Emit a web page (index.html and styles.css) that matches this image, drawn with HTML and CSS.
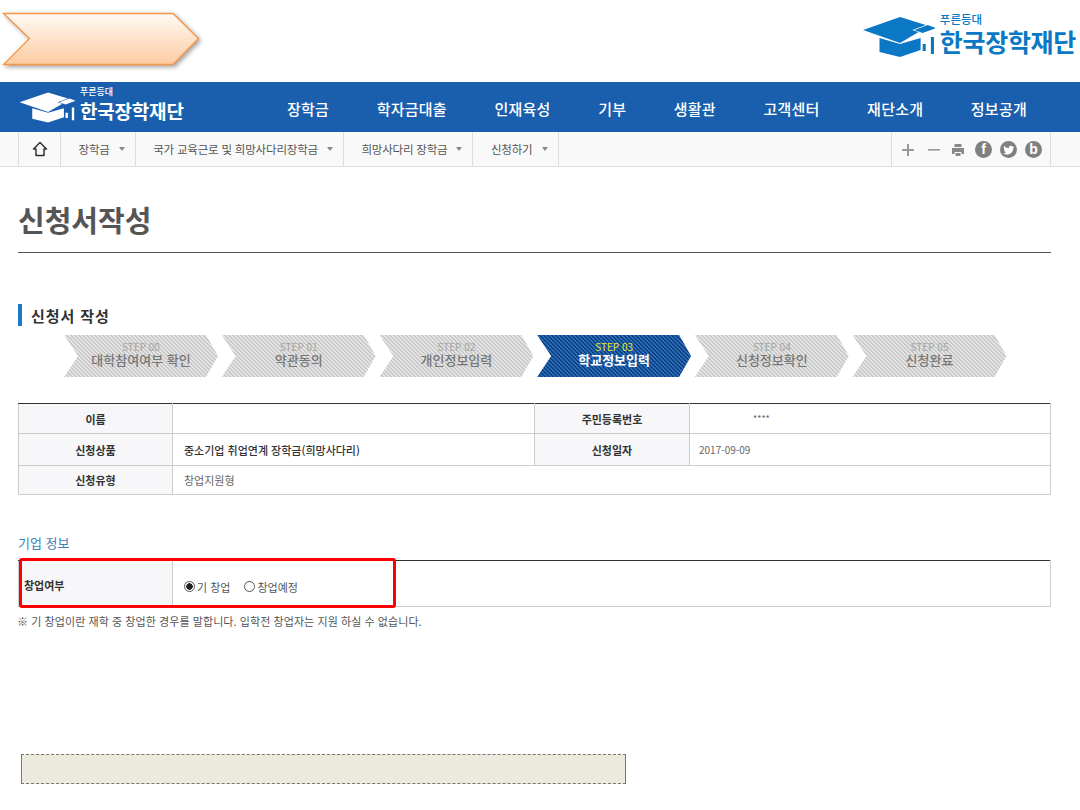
FILE: index.html
```html
<!DOCTYPE html>
<html lang="ko">
<head>
<meta charset="utf-8">
<title>신청서작성</title>
<link rel="stylesheet" href="styles.css">
</head>
<body>
<svg class="defs" width="0" height="0" aria-hidden="true">
  <symbol id="cap" viewBox="20 15 72 44" preserveAspectRatio="none">
    <path d="M22 30 58 17 83 25 70 30 76 32 58 43Z"/>
    <path d="M72 30 85 25 93 28 80 33Z"/>
    <path d="M38 38 58 44 78 38V50L58 57 38 52Z"/>
    <path d="M88 37h3v17h-3zM80 44h3v7h-3z"/>
  </symbol>
</svg>
<header class="top">
  <svg class="callout" width="204" height="60" viewBox="0 0 204 60">
    <defs><linearGradient id="peach" x1="0" y1="0" x2="0" y2="1"><stop offset="0" stop-color="#fffaf5"/><stop offset="1" stop-color="#fccba0"/></linearGradient></defs>
    <path d="M3.500 1.500H173L198.500 26.500 173 52.500H3.500L29.500 26.500Z" fill="url(#peach)" stroke="#f79646" stroke-width="1.300"/>
  </svg>
  <div class="logo logo-top">
    <svg class="logo-cap" width="72" height="44"><use href="#cap"/></svg>
    <div class="logo-text"><span class="logo-small">푸른등대</span><strong class="logo-name">한국장학재단</strong></div>
  </div>
</header>
<nav class="mainnav">
  <div class="logo logo-nav">
    <svg class="logo-cap" width="56" height="33"><use href="#cap"/></svg>
    <div class="logo-text"><span class="logo-small">푸른등대</span><strong class="logo-name">한국장학재단</strong></div>
  </div>
  <ul class="menu">
    <li>장학금</li><li>학자금대출</li><li>인재육성</li><li>기부</li><li>생활관</li><li>고객센터</li><li>재단소개</li><li>정보공개</li>
  </ul>
</nav>
<div class="crumbs">
  <div class="crumb-home">
    <svg width="16" height="16" viewBox="0 0 16 16"><path d="M8 1.500 1.500 8H4V14.500H12V8H14.500Z" fill="none" stroke="#333" stroke-width="1.500" stroke-linejoin="round"/></svg>
  </div>
  <div class="crumb">장학금<i class="caret"></i></div>
  <div class="crumb">국가 교육근로 및 희망사다리장학금<i class="caret"></i></div>
  <div class="crumb">희망사다리 장학금<i class="caret"></i></div>
  <div class="crumb">신청하기<i class="caret"></i></div>
  <div class="tools">
    <svg width="12" height="12" viewBox="0 0 12 12"><path d="M5 0h2v5h5v2H7v5H5V7H0V5h5z" fill="#999"/></svg>
    <svg width="12" height="12" viewBox="0 0 12 12"><path d="M0 5h12v1.600H0z" fill="#999"/></svg>
    <svg width="14" height="14" viewBox="0 0 14 14"><path d="M3.500 1h7v3h-7zM1 5h12v6h-2.500V9h-7v2H1zM4.500 10h5v3h-5z" fill="#888"/></svg>
    <span class="sns">f</span>
    <span class="sns"><svg width="12" height="10" viewBox="0 0 12 10"><path d="M0 8.500C3 10.500 10 10 10.300 3L11.800 1.500 10 2C9 .2 6 .2 5.700 3.200 4 3.200 2 2 1 .8.300 2.500 1 4 2 4.800L.8 4.500C1 6 2 6.800 3 7 2.500 8 1.500 8.500 0 8.500Z" fill="#fff"/></svg></span>
    <span class="sns">b</span>
  </div>
</div>
<main class="content">
  <h1 class="page-title">신청서작성</h1>
  <h2 class="section-title">신청서 작성</h2>
  <ol class="steps">
    <li class="step"><span class="step-no">STEP 00</span><span class="step-name">대학참여여부 확인</span></li>
    <li class="step"><span class="step-no">STEP 01</span><span class="step-name">약관동의</span></li>
    <li class="step"><span class="step-no">STEP 02</span><span class="step-name">개인정보입력</span></li>
    <li class="step active"><span class="step-no">STEP 03</span><span class="step-name">학교정보입력</span></li>
    <li class="step"><span class="step-no">STEP 04</span><span class="step-name">신청정보확인</span></li>
    <li class="step"><span class="step-no">STEP 05</span><span class="step-name">신청완료</span></li>
  </ol>
  <table class="info">
    <colgroup><col class="c1"><col class="c2"><col class="c3"><col class="c4"></colgroup>
    <tr class="r1"><th>이름</th><td></td><th>주민등록번호</th><td class="mask">****</td></tr>
    <tr class="r2"><th>신청상품</th><td class="strong">중소기업 취업연계 장학금(희망사다리)</td><th>신청일자</th><td class="date">2017-09-09</td></tr>
    <tr class="r3"><th>신청유형</th><td colspan="3">창업지원형</td></tr>
  </table>
  <h3 class="sub-title">기업 정보</h3>
  <div class="biz-wrap">
    <table class="info biz">
      <colgroup><col class="c1"><col></colgroup>
      <tr><th>창업여부</th><td>
        <div class="radios">
          <label class="radio"><input type="radio" name="startup" checked>기 창업</label>
          <label class="radio"><input type="radio" name="startup">창업예정</label>
        </div>
      </td></tr>
    </table>
    <div class="highlight"></div>
  </div>
  <p class="note">※ 기 창업이란 재학 중 창업한 경우를 말합니다. 입학전 창업자는 지원 하실 수 없습니다.</p>
  <div class="blank-box"></div>
</main>
</body>
</html>
```
FILE: styles.css
```css
* { box-sizing: border-box; }
html, body { margin: 0; padding: 0; }
body { width: 1080px; height: 810px; overflow: hidden; background: #fff; font-family: "Noto Sans CJK KR", "Noto Sans", sans-serif; color: #333; }
ul, ol { list-style: none; margin: 0; padding: 0; }
h1, h2, h3, p { margin: 0; }
.defs { display: block; height: 0; }

.top { height: 82px; display: flex; justify-content: space-between; padding: 12px 4px 0 0; }
.callout { filter: drop-shadow(2px 2px 2px rgba(90,90,90,.55)); flex: none; }

.logo { display: flex; color: #0a78c4; }
.logo-cap { fill: currentColor; flex: none; }
.logo-text { display: flex; flex-direction: column; }
.logo-small, .logo-name { display: block; white-space: nowrap; }
.logo-top { gap: 5px; height: 50px; }
.logo-top .logo-cap { margin-top: 3px; width: 74px; }
.logo-top .logo-small { font-size: 11.500px; line-height: 14px; font-weight: 500; }
.logo-top .logo-name { font-size: 25px; line-height: 31px; font-weight: 700; letter-spacing: -.3px; }

.mainnav { height: 50px; background: #1a5fad; display: flex; align-items: center; padding-left: 18px; color: #fff; }
.logo-nav { color: #fff; gap: 5px; width: 269px; flex: none; }
.logo-nav .logo-cap { width: 57px; }
.logo-nav .logo-text { margin-top: -5px; }
.logo-nav .logo-small { font-size: 9px; line-height: 12px; font-weight: 500; }
.logo-nav .logo-name { font-size: 19px; line-height: 25px; font-weight: 700; letter-spacing: -.2px; }
.menu { display: flex; gap: 47.500px; font-size: 15px; font-weight: 500; color: #fff; letter-spacing: .25px; padding-top: 3px; }
.menu li { white-space: nowrap; }

.crumbs { height: 35px; background: #f9f9f9; border-bottom: 1px solid #ddd; display: flex; padding: 0 29px 0 18px; color: #555; font-size: 11.500px; letter-spacing: -.2px; }
.crumb-home { width: 43px; border-left: 1px solid #ddd; border-right: 1px solid #ddd; display: flex; align-items: center; justify-content: center; }
.crumb { display: flex; align-items: center; gap: 9px; padding: 0 10px 0 17.500px; border-right: 1px solid #ddd; white-space: nowrap; }
.caret { width: 0; height: 0; border: 3.500px solid transparent; border-top: 4px solid #888; border-bottom: 0; }
.tools { margin-left: auto; width: 160px; border-left: 1px solid #ddd; border-right: 1px solid #ddd; display: flex; align-items: center; padding: 1px 0 0 10px; gap: 9px; }
.tools svg:nth-child(2) { margin-left: 5px; margin-right: 2px; }
.sns { width: 17px; height: 17px; border-radius: 50%; background: #808080; color: #fff; font-family: "Liberation Sans", sans-serif; font-weight: 700; font-size: 14px; line-height: 17px; text-align: center; display: flex; align-items: center; justify-content: center; flex: none; margin-right: -1px; }
.sns:nth-child(4) { margin-left: 1px; }

.content { padding: 0 29px 0 18px; }
.page-title { font-size: 29px; line-height: 40px; font-weight: 700; color: #555; padding-top: 32px; height: 86px; border-bottom: 1px solid #555; }
.section-title { margin-top: 51px; border-left: 4px solid #1a78c8; padding-left: 9px; height: 22px; font-size: 15px; line-height: 24px; font-weight: 700; color: #333; letter-spacing: .9px; }

.steps { display: flex; margin: 9px 0 0 46px; gap: 4px; }
.step { width: 154px; margin-left: -.3px; height: 42px; padding-bottom: 4px; display: flex; flex-direction: column; align-items: center; justify-content: center; clip-path: polygon(0 0, 142px 0, 154px 50%, 142px 100%, 0 100%, 14px 50%); background: repeating-linear-gradient(45deg, #c9c9c9 0 1.414px, #e4e4e4 1.414px 2.828px); color: #777; }
.steps .step:first-child { margin-left: 0; }
.step-no { font-size: 10px; line-height: 12px; color: #a5a5a5; }
.step-name { font-size: 13px; line-height: 14px; font-weight: 500; }
.step.active { background: repeating-linear-gradient(45deg, #0e3f7e 0 1.414px, #2a6dbb 1.414px 2.828px); color: #fff; }
.step.active .step-no { color: #e6ea2a; }
.step.active .step-name { font-weight: 700; }

.info { width: 1033px; margin-top: 26px; border-collapse: collapse; table-layout: fixed; font-size: 11px; border-top: 1px solid #333; }
.info th, .info td { border: 1px solid #ccc; padding: 0 10px; height: 30px; line-height: 14px; }
.info tr:first-child th, .info tr:first-child td { border-top: 1px solid #333; }
.info th { background: #f7f7f9; font-weight: 700; color: #333; text-align: center; }
.info td { color: #666; background: #fff; padding-left: 11px; }
.info .r2 th, .info .r2 td { height: 32px; }
.info .r3 th, .info .r3 td { height: 29px; }
.c1 { width: 154px; }
.c2 { width: 362px; }
.c3 { width: 155px; }
.info td.strong { font-weight: 500; color: #333; }
.info td.date { font-size: 10px; padding-left: 9px; }
.info td.mask { font-size: 9px; padding-left: 63px; }

.sub-title { margin-top: 39px; font-size: 13px; line-height: 18px; font-weight: 400; color: #3f7fb5; }
.biz-wrap { position: relative; margin-top: 8px; }
.biz { margin-top: 0; }
.biz th, .biz td { height: 46px; }
.biz th { text-align: left; padding: 3px 0 0 5px; }
.radios { display: flex; gap: 14px; padding-top: 6px; color: #555; }
.radio { display: flex; align-items: center; gap: 2px; white-space: nowrap; }
.radio input { appearance: none; margin: 0; width: 11px; height: 11px; border: 1px solid #555; border-radius: 50%; background: #fff; flex: none; }
.radio input:checked { background: radial-gradient(circle, #222 0 3px, #fff 3.500px); }
.highlight { position: absolute; left: 1px; top: -2px; width: 377px; height: 50px; border: 3px solid #f00; border-radius: 3px; }

.note { margin: 7px 0 0 -1px; font-size: 11px; line-height: 14px; color: #555; letter-spacing: .07px; }
.blank-box { margin: 126px 0 0 3px; width: 605px; height: 30px; background: #ece9dd; border: solid #777; border-width: 1px; border-top-style: dashed; border-bottom-style: dashed; }
```
